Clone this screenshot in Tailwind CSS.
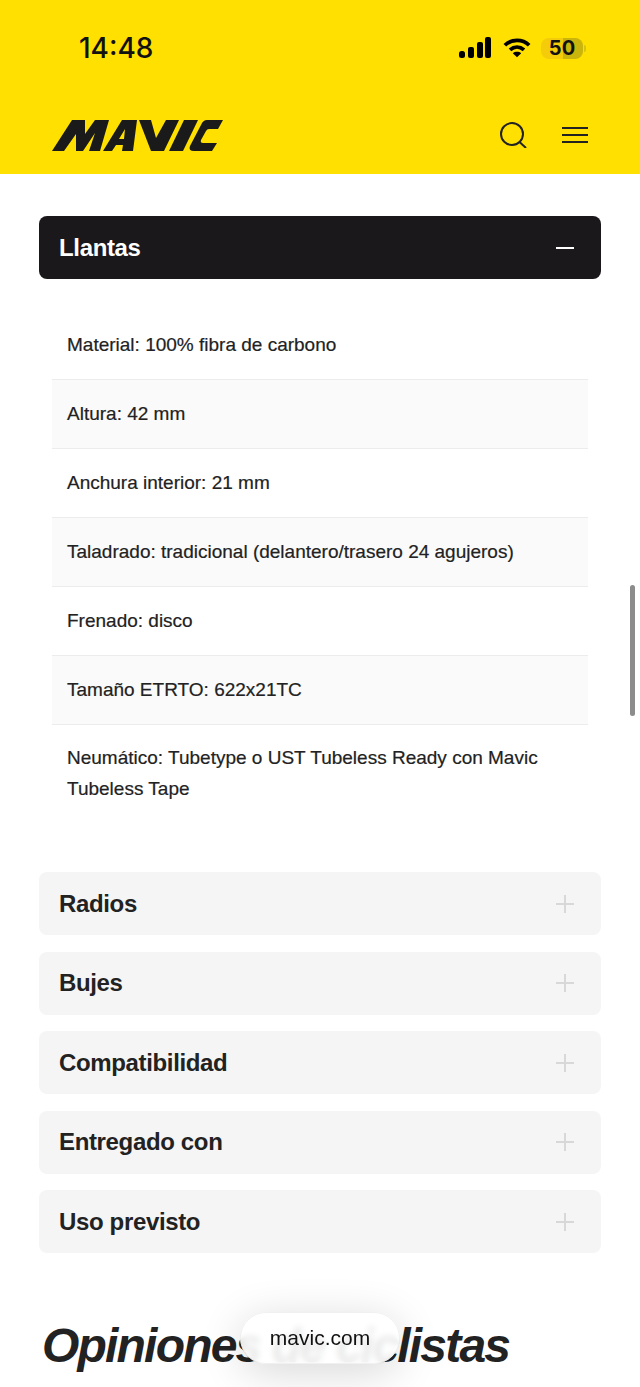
<!DOCTYPE html>
<html lang="es">
  <head>
    <meta charset="UTF-8" />
    <meta name="viewport" content="width=device-width, initial-scale=1.0" />
    <title>Mavic</title>
    <script src="https://cdn.jsdelivr.net/npm/@tailwindcss/browser@4"></script>
  </head>
  <body class="bg-white text-[#222] font-['Liberation_Sans',Arial,sans-serif] h-[1387px] overflow-hidden relative">
    <!-- Header -->
    <header class="bg-[#ffe000] h-[174px] flex flex-col">
      <div class="h-[96px] pl-[79px] pr-[54px] flex justify-between items-center">
        <span class="text-[28px] font-medium text-[#111] font-['Inter',sans-serif]">14:48</span>
        <div class="flex items-center">
          <svg width="33" height="22" viewBox="0 0 33 22" fill="#000">
            <rect x="0" y="14" width="6" height="7" rx="2.5" />
            <rect x="9" y="10" width="6" height="11" rx="2" />
            <rect x="18" y="5" width="6" height="16" rx="2" />
            <rect x="26" y="0" width="6" height="21" rx="2" />
          </svg>
          <svg class="ml-[11px]" width="28" height="22" viewBox="0 0 30 22" fill="none" stroke="#000" stroke-width="4">
            <path d="M2 8 C9 1 21 1 28 8" />
            <path d="M7.5 13 C12 9 18 9 22.5 13" />
            <path d="M15 21 L10.5 16.5 C13 14.5 17 14.5 19.5 16.5 Z" fill="#000" stroke="none" />
          </svg>
          <div class="relative ml-[10px] w-[42px] h-[21px] rounded-[8px] bg-[#f5cc0a] flex items-center justify-center">
            <div class="absolute right-0 top-0 h-full w-[20px] rounded-r-[8px] bg-[#c9b50c]"></div>
            <span class="relative text-[20px] leading-[21px] font-bold text-[#111] font-['Inter',sans-serif]">50</span>
          </div>
          <div class="ml-[1px] w-[2px] h-[7px] rounded-r-full bg-[#d9c40a]"></div>
        </div>
      </div>
      <div class="flex-1 px-[52px] flex justify-between items-center">
        <!-- logo -->
        <svg width="172" height="31" viewBox="0 0 172 31" fill="#1a1a1a">
          <polygon points="0,31 20,0 33,0 33,14 43,0 57,0 48,31 37,31 43,13 31,31 24,31 24,14 12,31" />
          <path fill-rule="evenodd" d="M51 31 L70 0 H85 L81 31 H70 L71 25 H64 L60 31 Z M67 19 H72 L73 9 Z" />
          <polygon points="87,0 99,0 104,18 114,0 127,0 112,31 99,31" />
          <polygon points="132,0 146,0 131,31 117,31" />
          <path d="M155 0 H171 L166 9 H157 Q155 9 154 11 L149 20 Q148 23 151 23 H165 L160 31 H142 Q136 31 138 26 L149 5 Q151 0 155 0 Z" />
        </svg>
        <div class="flex items-center gap-[35px]">
          <svg width="27" height="26" viewBox="0 0 27 26" fill="none" stroke="#222" stroke-width="2">
            <circle cx="12" cy="12" r="11" />
            <path d="M19.5 20 L26 26" />
          </svg>
          <svg width="26" height="16" viewBox="0 0 26 16" fill="none" stroke="#222" stroke-width="2">
            <path d="M0 1 H26 M0 8 H26 M0 15 H26" />
          </svg>
        </div>
      </div>
    </header>

    <main class="px-[39px] pt-[42px]">
      <!-- Open section -->
      <div class="bg-[#1a181a] text-white rounded-[8px] h-[63px] pl-[20px] pr-[27px] flex items-center justify-between">
        <h3 class="text-[24px] font-bold tracking-[-0.35px]">Llantas</h3>
        <span class="w-[18px] h-[2px] bg-white"></span>
      </div>
      <ul class="mx-[13px] mt-[32px] text-[19px] leading-[31px] text-[#222] [-webkit-text-stroke:0.2px_#222]">
        <li class="pl-[15px] pt-[18px] pb-[19px] border-b border-[#ececec]">Material: 100% fibra de carbono</li>
        <li class="pl-[15px] pt-[18px] pb-[19px] border-b border-[#ececec] bg-[#fafafa]">Altura: 42 mm</li>
        <li class="pl-[15px] pt-[18px] pb-[19px] border-b border-[#ececec]">Anchura interior: 21 mm</li>
        <li class="pl-[15px] pt-[18px] pb-[19px] border-b border-[#ececec] bg-[#fafafa]">Taladrado: tradicional (delantero/trasero 24 agujeros)</li>
        <li class="pl-[15px] pt-[18px] pb-[19px] border-b border-[#ececec]">Frenado: disco</li>
        <li class="pl-[15px] pt-[18px] pb-[19px] border-b border-[#ececec] bg-[#fafafa]">Tamaño ETRTO: 622x21TC</li>
        <li class="pl-[15px] pr-[30px] pt-[17px] pb-[19px]">Neumático: Tubetype o UST Tubeless Ready con Mavic Tubeless Tape</li>
      </ul>

      <!-- Closed sections -->
      <div class="mt-[49px] flex flex-col gap-[16.5px]">
        <div class="bg-[#f5f5f5] rounded-[8px] h-[63px] pl-[20px] pr-[27px] flex items-center justify-between">
          <h3 class="text-[24px] font-bold tracking-[-0.35px]">Radios</h3>
          <svg width="18" height="18" viewBox="0 0 18 18" stroke="#d8d8d8" stroke-width="2"><path d="M0 9 H18 M9 0 V18" /></svg>
        </div>
        <div class="bg-[#f5f5f5] rounded-[8px] h-[63px] pl-[20px] pr-[27px] flex items-center justify-between">
          <h3 class="text-[24px] font-bold tracking-[-0.35px]">Bujes</h3>
          <svg width="18" height="18" viewBox="0 0 18 18" stroke="#d8d8d8" stroke-width="2"><path d="M0 9 H18 M9 0 V18" /></svg>
        </div>
        <div class="bg-[#f5f5f5] rounded-[8px] h-[63px] pl-[20px] pr-[27px] flex items-center justify-between">
          <h3 class="text-[24px] font-bold tracking-[-0.35px]">Compatibilidad</h3>
          <svg width="18" height="18" viewBox="0 0 18 18" stroke="#d8d8d8" stroke-width="2"><path d="M0 9 H18 M9 0 V18" /></svg>
        </div>
        <div class="bg-[#f5f5f5] rounded-[8px] h-[63px] pl-[20px] pr-[27px] flex items-center justify-between">
          <h3 class="text-[24px] font-bold tracking-[-0.35px]">Entregado con</h3>
          <svg width="18" height="18" viewBox="0 0 18 18" stroke="#d8d8d8" stroke-width="2"><path d="M0 9 H18 M9 0 V18" /></svg>
        </div>
        <div class="bg-[#f5f5f5] rounded-[8px] h-[63px] pl-[20px] pr-[27px] flex items-center justify-between">
          <h3 class="text-[24px] font-bold tracking-[-0.35px]">Uso previsto</h3>
          <svg width="18" height="18" viewBox="0 0 18 18" stroke="#d8d8d8" stroke-width="2"><path d="M0 9 H18 M9 0 V18" /></svg>
        </div>
      </div>

      <h2 class="mt-[65px] ml-[3px] text-[48px] leading-[56px] tracking-[-1.8px] font-bold italic text-[#222] whitespace-nowrap">Opiniones de ciclistas</h2>
    </main>

    <!-- Scrollbar -->
    <div class="absolute right-[5px] top-[585px] w-[5px] h-[131px] rounded-full bg-[#8c8c8c]"></div>

    <!-- Safari address pill -->
    <div class="absolute left-[240px] top-[1312px] w-[160px] h-[52px] rounded-full bg-white/90 backdrop-blur-[3px] border border-[#f0f0f0] shadow-[0_8px_44px_rgba(0,0,0,0.16)] flex items-center justify-center text-[21px] text-[#111]">mavic.com</div>
  </body>
</html>
